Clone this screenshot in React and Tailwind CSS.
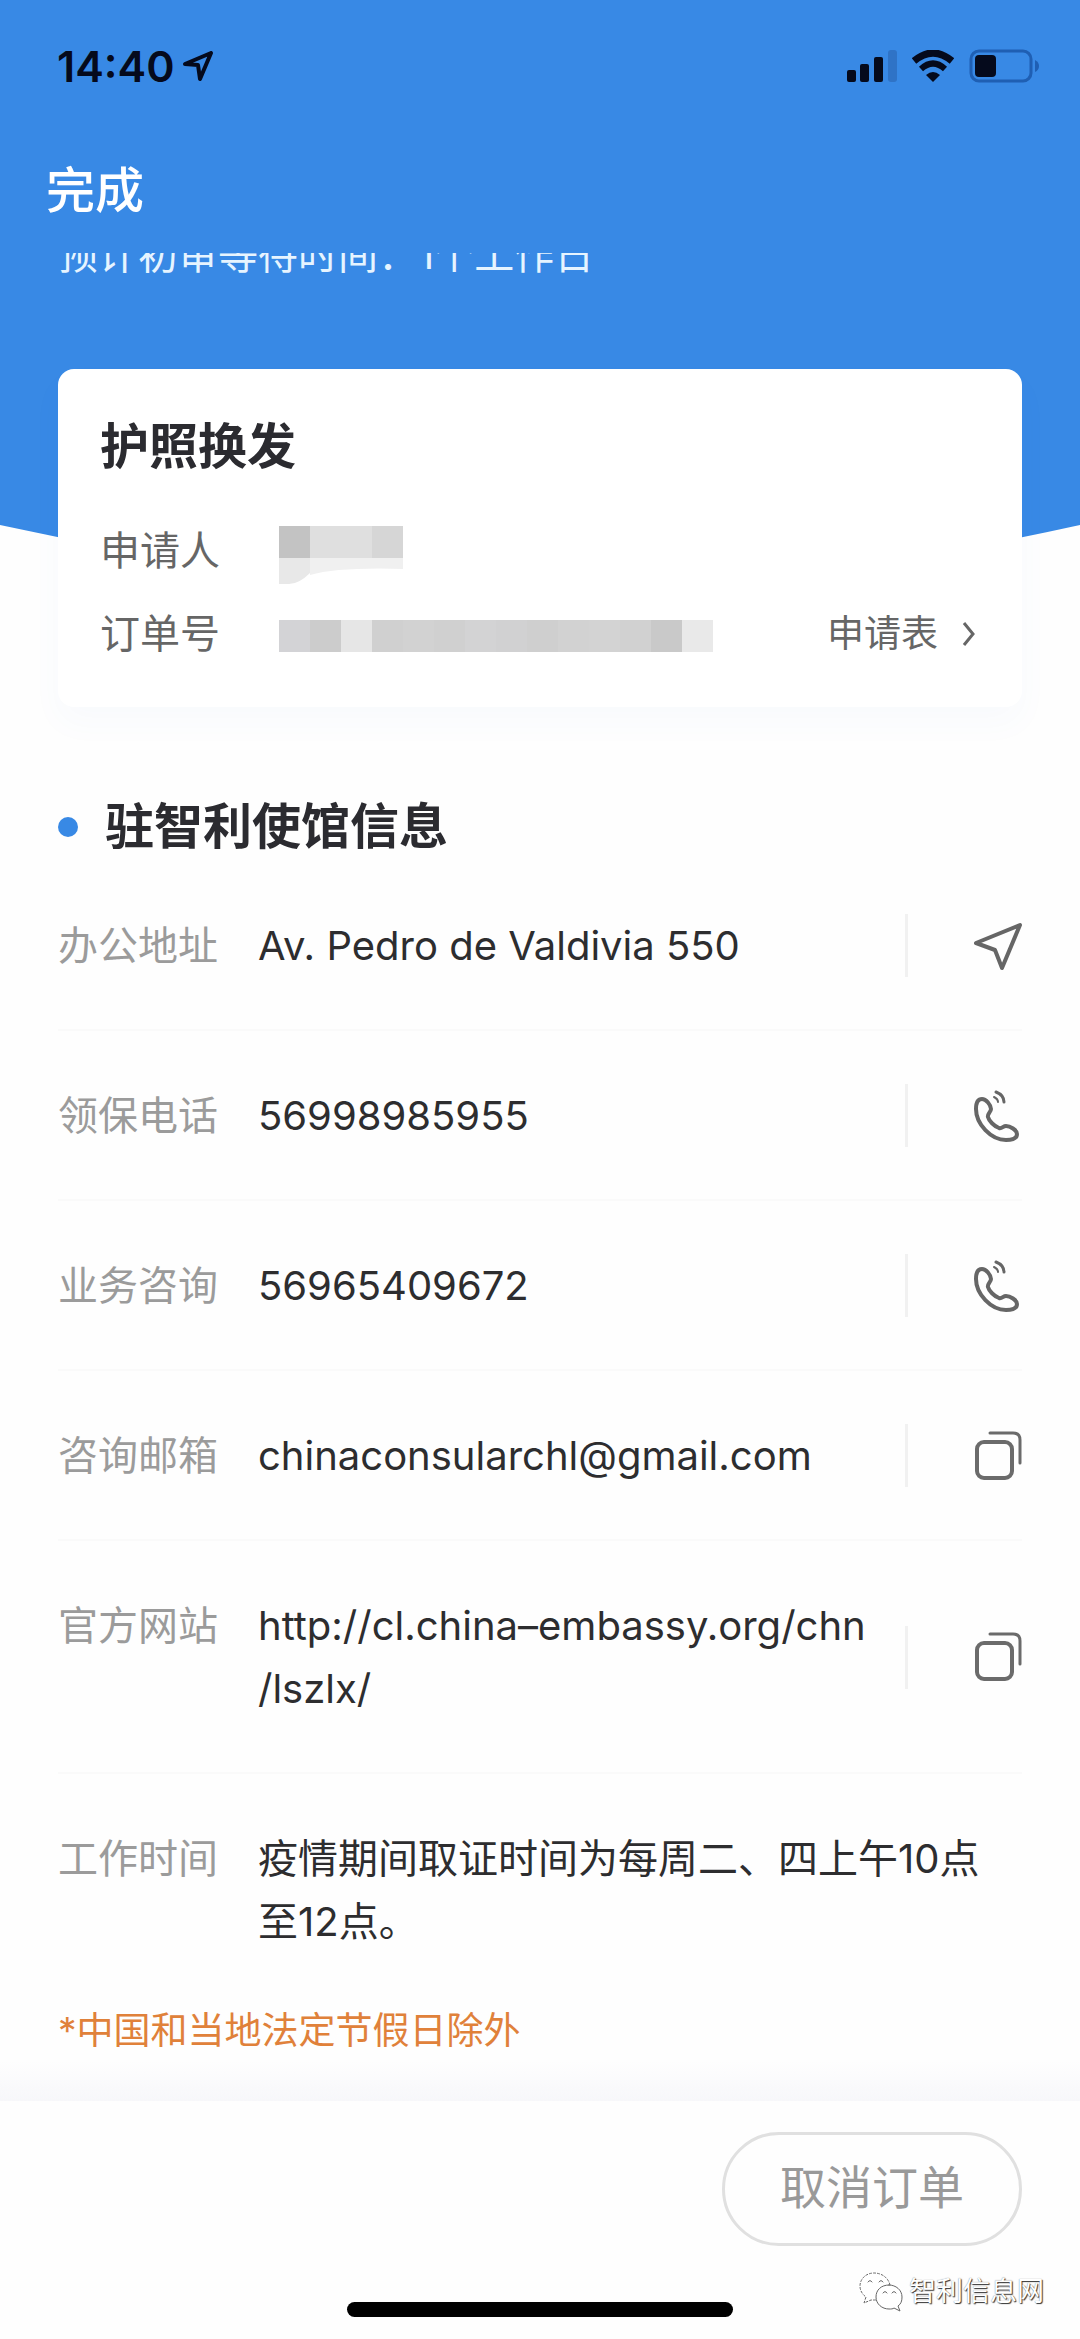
import React from 'react';

const LocationIcon = () => (
    <svg viewBox="0 0 48 48" className="w-12 h-12" fill="none" stroke="#666" strokeWidth="4" strokeLinejoin="round">
        <path d="M2 21 L46 3 L28 46 L21 28 Z" />
    </svg>
);

const PhoneIcon = () => (
    <svg viewBox="0 0 48 52" className="w-12 h-[52px]" fill="none" stroke="#666" strokeWidth="4" strokeLinecap="round" strokeLinejoin="round">
        <path d="M8 9 C4 9 2 13 2 19 C2 34 17 50 32 50 C39 50 43 48 43 44 C43 40 36 36 32 36 C29 36 28 39 25 38 C20 36 15 31 14 27 C13 24 17 22 17 19 C17 15 12 9 8 9 Z" />
        <path d="M22 2 C27 4 30 7 30 12" strokeWidth="3" />
        <path d="M20 7 C22 8 24 10 24 12" strokeWidth="2" />
    </svg>
);

const CopyIcon = () => (
    <svg viewBox="0 0 48 50" className="w-12 h-[50px]" fill="none" stroke="#6b6b6b" strokeLinecap="round">
        <rect x="3" y="11" width="35" height="36" rx="7" strokeWidth="4" />
        <path d="M16 2 H39 Q46 2 46 9 V32" strokeWidth="3" />
    </svg>
);

const WechatIcon = () => (
    <svg viewBox="0 0 44 40" className="w-11 h-10" fill="#fff" stroke="#666" strokeWidth="1" strokeLinecap="round">
        <path d="M31 13 C29 5 22 1 15 1 C7 1 1 7 1 14 C1 19 4 23 7 25 L5 31 L12 28 C14 28 15 28 17 28" strokeDasharray="2 2" />
        <path d="M30 13 C22 13 17 18 17 25 C17 32 23 37 30 37 C32 37 34 37 35 36 L41 39 L39 34 C42 32 43 29 43 25 C43 18 37 13 30 13 Z" />
        <path d="M9 10 Q11 7 13 10 M20 10 Q22 7 24 10 M24 21 Q26 18 28 21 M33 21 Q35 18 37 21" fill="none" />
    </svg>
);

const contactRows = [
    { label: '办公地址', value: 'Av. Pedro de Valdivia 550', action: '导航', icon: <LocationIcon /> },
    { label: '领保电话', value: '56998985955', action: '拨打领保电话', icon: <PhoneIcon /> },
    { label: '业务咨询', value: '56965409672', action: '拨打咨询电话', icon: <PhoneIcon /> },
    { label: '咨询邮箱', value: 'chinaconsularchl@gmail.com', action: '复制邮箱', icon: <CopyIcon /> },
    { label: '官方网站', value: 'http://cl.china–embassy.org/chn\n/lszlx/', action: '复制网址', icon: <CopyIcon /> },
    { label: '工作时间', value: '疫情期间取证时间为每周二、四上午10点至12点。' },
];

const orderMosaic = ['#d3d3d6', '#cccccc', '#e6e6e6', '#d0d0d0', '#d2d2d2', '#d0d0d0', '#d3d3d4', '#d1d1d2', '#cfcfcf', '#d2d2d2', '#d3d3d3', '#d1d1d1', '#c9c9c9', '#e9e9e9'];

const StatusBar = () => (
    <div className="h-[132px] pl-[57px] pr-10 flex items-center justify-between text-[#050a1c]">
        <div className="flex items-center gap-2">
            <span className="text-[43px] leading-[60px] font-semibold">14:40</span>
            <svg viewBox="0 0 30 30" className="w-[30px] h-[30px]" fill="none" stroke="currentColor" strokeWidth="4" strokeLinejoin="round">
                <path d="M2 13 L28 2 L17 28 L15 14 Z" />
            </svg>
        </div>
        <div className="flex items-center gap-[15px]">
            <svg viewBox="0 0 50 32" className="w-[50px] h-8" fill="currentColor">
                <rect x="0" y="20" width="9" height="12" rx="2" />
                <rect x="13" y="14" width="9" height="18" rx="2" />
                <rect x="27" y="7" width="9" height="25" rx="2" />
                <rect x="41" y="0" width="9" height="32" rx="3" fill="#2f73c6" />
            </svg>
            <svg viewBox="0 0 42 32" className="w-[42px] h-8" fill="none" stroke="currentColor">
                <path d="M2 11 Q21 -5 40 11" strokeWidth="7" />
                <path d="M9 19 Q21 8 33 19" strokeWidth="6" />
                <path d="M14 25 Q21 19 28 25 L21 32 Z" fill="currentColor" stroke="none" />
            </svg>
            <svg viewBox="0 0 71 34" className="w-[71px] h-[34px]">
                <rect x="2" y="2" width="60" height="30" rx="8" fill="none" stroke="#1f5fb3" strokeWidth="3" />
                <rect x="6" y="6" width="21" height="22" rx="4" fill="currentColor" />
                <path d="M66 11 Q70 13 70 17 Q70 21 66 23 Z" fill="#1f5fb3" />
            </svg>
        </div>
    </div>
);

const OrderCard = () => (
    <section className="relative mx-[58px] -mt-[216px] pt-12 pb-8 pl-[42px] pr-[46px] bg-white rounded-2xl shadow-[0_16px_32px_rgba(56,137,229,0.03)]">
        <h2 className="text-[49px] leading-[60px] font-bold text-[#2b2b30]">护照换发</h2>
        <div className="mt-8 h-[83px] flex items-center text-[40px] text-[#666]">
            <span className="w-[179px]">申请人</span>
            <svg viewBox="0 0 124 70" className="w-[124px] h-[70px]">
                <rect x="0" y="10" width="31" height="32" fill="#c3c3c3" />
                <rect x="31" y="10" width="62" height="32" fill="#dfdfdf" />
                <rect x="93" y="10" width="31" height="32" fill="#d6d6d6" />
                <path d="M0 42 H31 V57 Q20 68 10 68 H0 Z" fill="#e8e8e8" />
                <path d="M31 42 H124 V53 Q60 51 31 59 Z" fill="#f0f0f0" />
            </svg>
        </div>
        <div className="h-[83px] flex items-center text-[40px] text-[#666]">
            <span className="w-[179px]">订单号</span>
            <svg viewBox="0 0 434 40" className="w-[434px] h-10">
                {orderMosaic.map((color, i) => (
                    <rect key={i} x={i * 31} y="6" width="31" height="32" fill={color} />
                ))}
            </svg>
            <button type="button" className="ml-auto flex items-center gap-6 text-[37px]">
                申请表
                <svg viewBox="0 0 14 24" className="w-3.5 h-6" fill="none" stroke="currentColor" strokeWidth="3">
                    <path d="M2 1 L11 12 L2 23" />
                </svg>
            </button>
        </div>
    </section>
);

const InfoRow = ({ row, last }) => (
    <div className={last ? 'flex pt-[53px]' : 'flex pt-[53px] pb-[52px] border-b-2 border-[#fafafa]'}>
        <dt className="w-[200px] shrink-0 text-[#9b9b9b]">{row.label}</dt>
        <dd className="flex-1 flex items-center text-[#2d2d2f]">
            <span className={row.icon ? 'flex-1 whitespace-pre-line' : 'flex-1 pr-8'}>{row.value}</span>
            {row.icon && (
                <button type="button" aria-label={row.action} className="w-[117px] h-[63px] shrink-0 flex items-center justify-end border-l-3 border-[#f1f1f1]">
                    {row.icon}
                </button>
            )}
        </dd>
    </div>
);

const App = () => {
    return (
        <div className="relative min-h-screen flex flex-col bg-[#fefefe] font-['Inter','Noto_Sans_CJK_SC',sans-serif]">
            <header>
                <div className="bg-[#3889e5] pb-[250px]">
                    <StatusBar />
                    <div className="h-[121px] pb-1 pl-[46px] flex items-center">
                        <h1 className="text-[49px] leading-[60px] font-medium text-white">完成</h1>
                    </div>
                    {/* scrolled under the title bar, only the lower half shows */}
                    <div className="h-[22px] pl-[58px] overflow-hidden flex items-end">
                        <p className="text-[40px] leading-[40px] text-[#e6f4ff]">预计初审等待时间：1个工作日</p>
                    </div>
                </div>
                <svg viewBox="0 0 1080 60" preserveAspectRatio="none" className="block w-full h-[60px]" fill="#3889e5">
                    <path d="M0 0 Q540 120 1080 0 Z" />
                </svg>
            </header>

            <OrderCard />

            <section className="mt-[88px] px-[58px]">
                <div className="h-16 flex items-center gap-[27px]">
                    <span className="w-5 h-5 rounded-full bg-[#3889e5]" />
                    <h2 className="text-[49px] leading-[60px] font-bold text-[#2b2b30]">驻智利使馆信息</h2>
                </div>
                <dl className="pt-0.5 text-[40px] leading-[63px]">
                    {contactRows.map((row, i) => (
                        <InfoRow key={row.label} row={row} last={i === contactRows.length - 1} />
                    ))}
                </dl>
                <p className="mt-12 text-[37px] leading-[60px] text-[#e0813a]">*中国和当地法定节假日除外</p>
            </section>

            <div className="mt-auto h-10 bg-linear-to-b from-[#fefefe] to-[#f7f7fa]" />
            <footer className="bg-[#fefefe] pt-[31px] pb-[23px]">
                <div className="px-[58px] flex justify-end">
                    <button type="button" className="w-[300px] h-[114px] pb-1 rounded-full border-3 border-[#e0e0e0] text-[46px] text-[#999]">取消订单</button>
                </div>
                <div className="mt-14 mx-auto w-[386px] h-[15px] rounded-full bg-black" />
            </footer>

            <div className="absolute right-9 bottom-7 flex items-center gap-1.5">
                <WechatIcon />
                <span className="text-[27px] leading-[40px] text-white [text-shadow:1px_1px_1px_#333,0_0_1px_#777]">智利信息网</span>
            </div>
        </div>
    );
};

export default App;
